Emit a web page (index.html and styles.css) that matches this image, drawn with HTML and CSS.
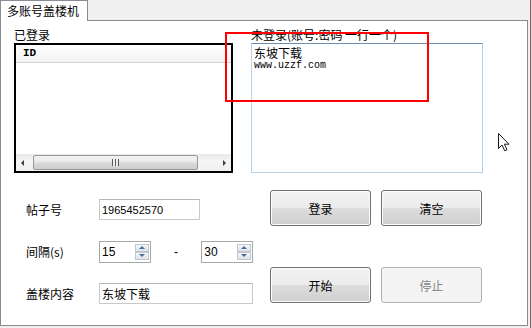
FILE: index.html
```html
<!DOCTYPE html>
<html lang="zh">
<head>
    <meta charset="UTF-8">
    <title>多账号盖楼机</title>
    <link rel="stylesheet" href="styles.css">
</head>
<body>
    <div class="window">
        <div class="tabs">
            <div class="tab">多账号盖楼机</div>
        </div>
        <div class="panel">
            <div class="top">
                <div class="col">
                    <div class="caption">已登录</div>
                    <div class="listbox">
                        <div class="list-head">ID</div>
                        <div class="list-body"></div>
                        <div class="hscroll">
                            <span class="arrow-left"></span>
                            <div class="thumb"><span class="grip"></span></div>
                            <span class="arrow-right"></span>
                        </div>
                    </div>
                </div>
                <div class="col">
                    <div class="caption">未登录(账号:密码 一行一个)</div>
                    <div class="memo">
                        <div class="memo-line">东坡下载</div>
                        <div class="memo-url">www.uzzf.com</div>
                    </div>
                </div>
            </div>
            <div class="bottom">
                <div class="fields">
                    <label>帖子号</label>
                    <div class="value"><input class="edit edit-id" type="text" value="1965452570"></div>

                    <label>间隔(s)</label>
                    <div class="value spin-row">
                        <div class="spin">
                            <span class="spin-text">15</span>
                            <div class="spin-btns">
                                <span class="spin-up"></span>
                                <span class="spin-down"></span>
                            </div>
                        </div>
                        <span class="dash">-</span>
                        <div class="spin">
                            <span class="spin-text">30</span>
                            <div class="spin-btns">
                                <span class="spin-up"></span>
                                <span class="spin-down"></span>
                            </div>
                        </div>
                    </div>

                    <label>盖楼内容</label>
                    <div class="value"><input class="edit edit-content" type="text" value="东坡下载"></div>
                </div>
                <div class="buttons">
                    <button class="btn">登录</button>
                    <button class="btn">清空</button>
                    <button class="btn">开始</button>
                    <button class="btn" disabled>停止</button>
                </div>
            </div>
        </div>

        <div class="red-box"></div>
        <svg class="cursor" width="13" height="20" viewBox="0 0 13 20">
            <path d="M1.5 1.5 L1.5 16.5 L5 13 L7.8 18.8 L10 17.8 L7.4 12.2 L12 12.2 Z" fill="#fff" stroke="#1a1a1a" stroke-width="1" stroke-linejoin="miter"/>
        </svg>
    </div>
</body>
</html>
```

FILE: styles.css
```css
body {
    margin: 0;
    background-color: #f0f0f0;
    font-family: "Noto Sans CJK SC", "Liberation Sans", sans-serif;
    font-size: 12px;
    color: #000;
}
.window {
    position: relative;
    width: 530px;
    height: 328px;
    border-right: 1px solid #6e6e6e;
}
.tabs {
    display: flex;
    height: 20px;
}
.tab {
    position: relative;
    z-index: 1;
    width: 88px;
    height: 21px;
    box-sizing: border-box;
    padding-left: 6px;
    border: 1px solid #898c95;
    border-bottom: none;
    background-color: #fff;
    line-height: 19px;
    font-size: 12px;
}
.panel {
    width: 528px;
    height: 306px;
    box-sizing: border-box;
    border: 1px solid #898c95;
    background-color: #fff;
    padding: 6px 0 0 13px;
}
.top {
    display: flex;
    gap: 18px;
}
.caption {
    height: 16px;
    line-height: 16px;
    white-space: nowrap;
}
.listbox {
    width: 219px;
    height: 130px;
    box-sizing: border-box;
    border: 2px solid #000;
    display: flex;
    flex-direction: column;
}
.list-head {
    height: 18px;
    box-sizing: border-box;
    padding-left: 7px;
    border-bottom: 1px solid #d5d5d5;
    background: linear-gradient(#ffffff, #f3f3f3);
    font-family: "Liberation Mono", monospace;
    font-weight: bold;
    font-size: 11px;
    line-height: 17px;
}
.list-body {
    flex: 1;
}
.hscroll {
    height: 17px;
    display: flex;
    align-items: center;
    background: linear-gradient(#e9e9e9, #f5f5f5 40%, #f0f0f0);
}
.arrow-left,
.arrow-right {
    width: 0;
    height: 0;
    border-top: 3px solid transparent;
    border-bottom: 3px solid transparent;
}
.arrow-left {
    margin-left: 5px;
    border-right: 3px solid #3c3c3c;
}
.arrow-right {
    margin-left: 25px;
    border-left: 3px solid #3c3c3c;
}
.thumb {
    margin-left: 9px;
    width: 165px;
    height: 15px;
    box-sizing: border-box;
    border: 1px solid #979797;
    border-radius: 2px;
    background: linear-gradient(#f3f3f3, #e9e9e9 45%, #d8d8d8 55%, #cfcfcf);
    display: flex;
    justify-content: center;
    align-items: center;
}
.grip {
    width: 7px;
    height: 7px;
    background: repeating-linear-gradient(90deg, #5a5a5a 0 1px, #f0f0f0 1px 3px);
}
.memo {
    width: 232px;
    height: 130px;
    box-sizing: border-box;
    border: 1px solid #b7d2e8;
    border-top-color: #6a8eb0;
    padding: 2px 2px;
}
.memo-line {
    line-height: 14px;
}
.memo-url {
    font-family: "Liberation Mono", monospace;
    font-size: 10px;
    line-height: 12px;
}
.bottom {
    display: flex;
    margin-top: 17px;
}
.fields {
    display: grid;
    grid-template-columns: 73px 154px;
    grid-auto-rows: 21px;
    row-gap: 21px;
    margin: 9px 0 0 12px;
}
.fields label {
    line-height: 21px;
    white-space: nowrap;
}
.value {
    display: flex;
    align-items: center;
}
.edit {
    height: 21px;
    box-sizing: border-box;
    margin: 0;
    padding: 0 2px;
    border: 1px solid #c9c9c9;
    border-top-color: #b5b5b5;
    font-size: 11px;
    color: #000;
    outline: none;
}
.edit-id {
    width: 101px;
    font-family: "Liberation Sans", sans-serif;
}
.edit-content {
    width: 154px;
    font-family: "Noto Sans CJK SC", sans-serif;
    font-size: 12px;
}
.spin-row {
    gap: 0;
}
.spin {
    width: 52px;
    height: 22px;
    box-sizing: border-box;
    border: 1px solid #a8a8a8;
    display: flex;
    align-items: center;
    justify-content: space-between;
    padding: 1px 1px 1px 2px;
}
.spin-text {
    font-family: "Liberation Sans", sans-serif;
    font-size: 12px;
}
.spin-btns {
    display: flex;
    flex-direction: column;
    gap: 0;
}
.spin-up,
.spin-down {
    width: 14px;
    height: 8px;
    box-sizing: border-box;
    border: 1px solid #c2c7cf;
    background: linear-gradient(#f6f8fa, #dde3ea);
    display: flex;
    justify-content: center;
    align-items: center;
}
.spin-up::after,
.spin-down::after {
    content: "";
    width: 0;
    height: 0;
    border-left: 3px solid transparent;
    border-right: 3px solid transparent;
}
.spin-up::after {
    border-bottom: 3px solid #4c6a9c;
}
.spin-down::after {
    border-top: 3px solid #4c6a9c;
}
.dash {
    width: 51px;
    text-align: center;
    font-family: "Liberation Sans", sans-serif;
}
.buttons {
    display: grid;
    grid-template-columns: 101px 101px;
    grid-auto-rows: 36px;
    column-gap: 10px;
    row-gap: 41px;
    margin-left: 17px;
}
.btn {
    margin: 0;
    padding: 0;
    border: 1px solid #707070;
    border-radius: 3px;
    background: linear-gradient(#f2f2f2, #ebebeb 50%, #dddddd 50%, #cfcfcf);
    box-shadow: inset 0 0 0 1px #fcfcfc;
    font-family: "Noto Sans CJK SC", sans-serif;
    font-size: 12px;
    color: #000;
}
.btn:disabled {
    border-color: #adb2b5;
    background: #f4f4f4;
    box-shadow: none;
    color: #838383;
}
.red-box {
    position: absolute;
    left: 225px;
    top: 32px;
    width: 204px;
    height: 70px;
    box-sizing: border-box;
    border: 2px solid #ff0000;
}
.cursor {
    position: absolute;
    left: 497px;
    top: 132px;
}
```
